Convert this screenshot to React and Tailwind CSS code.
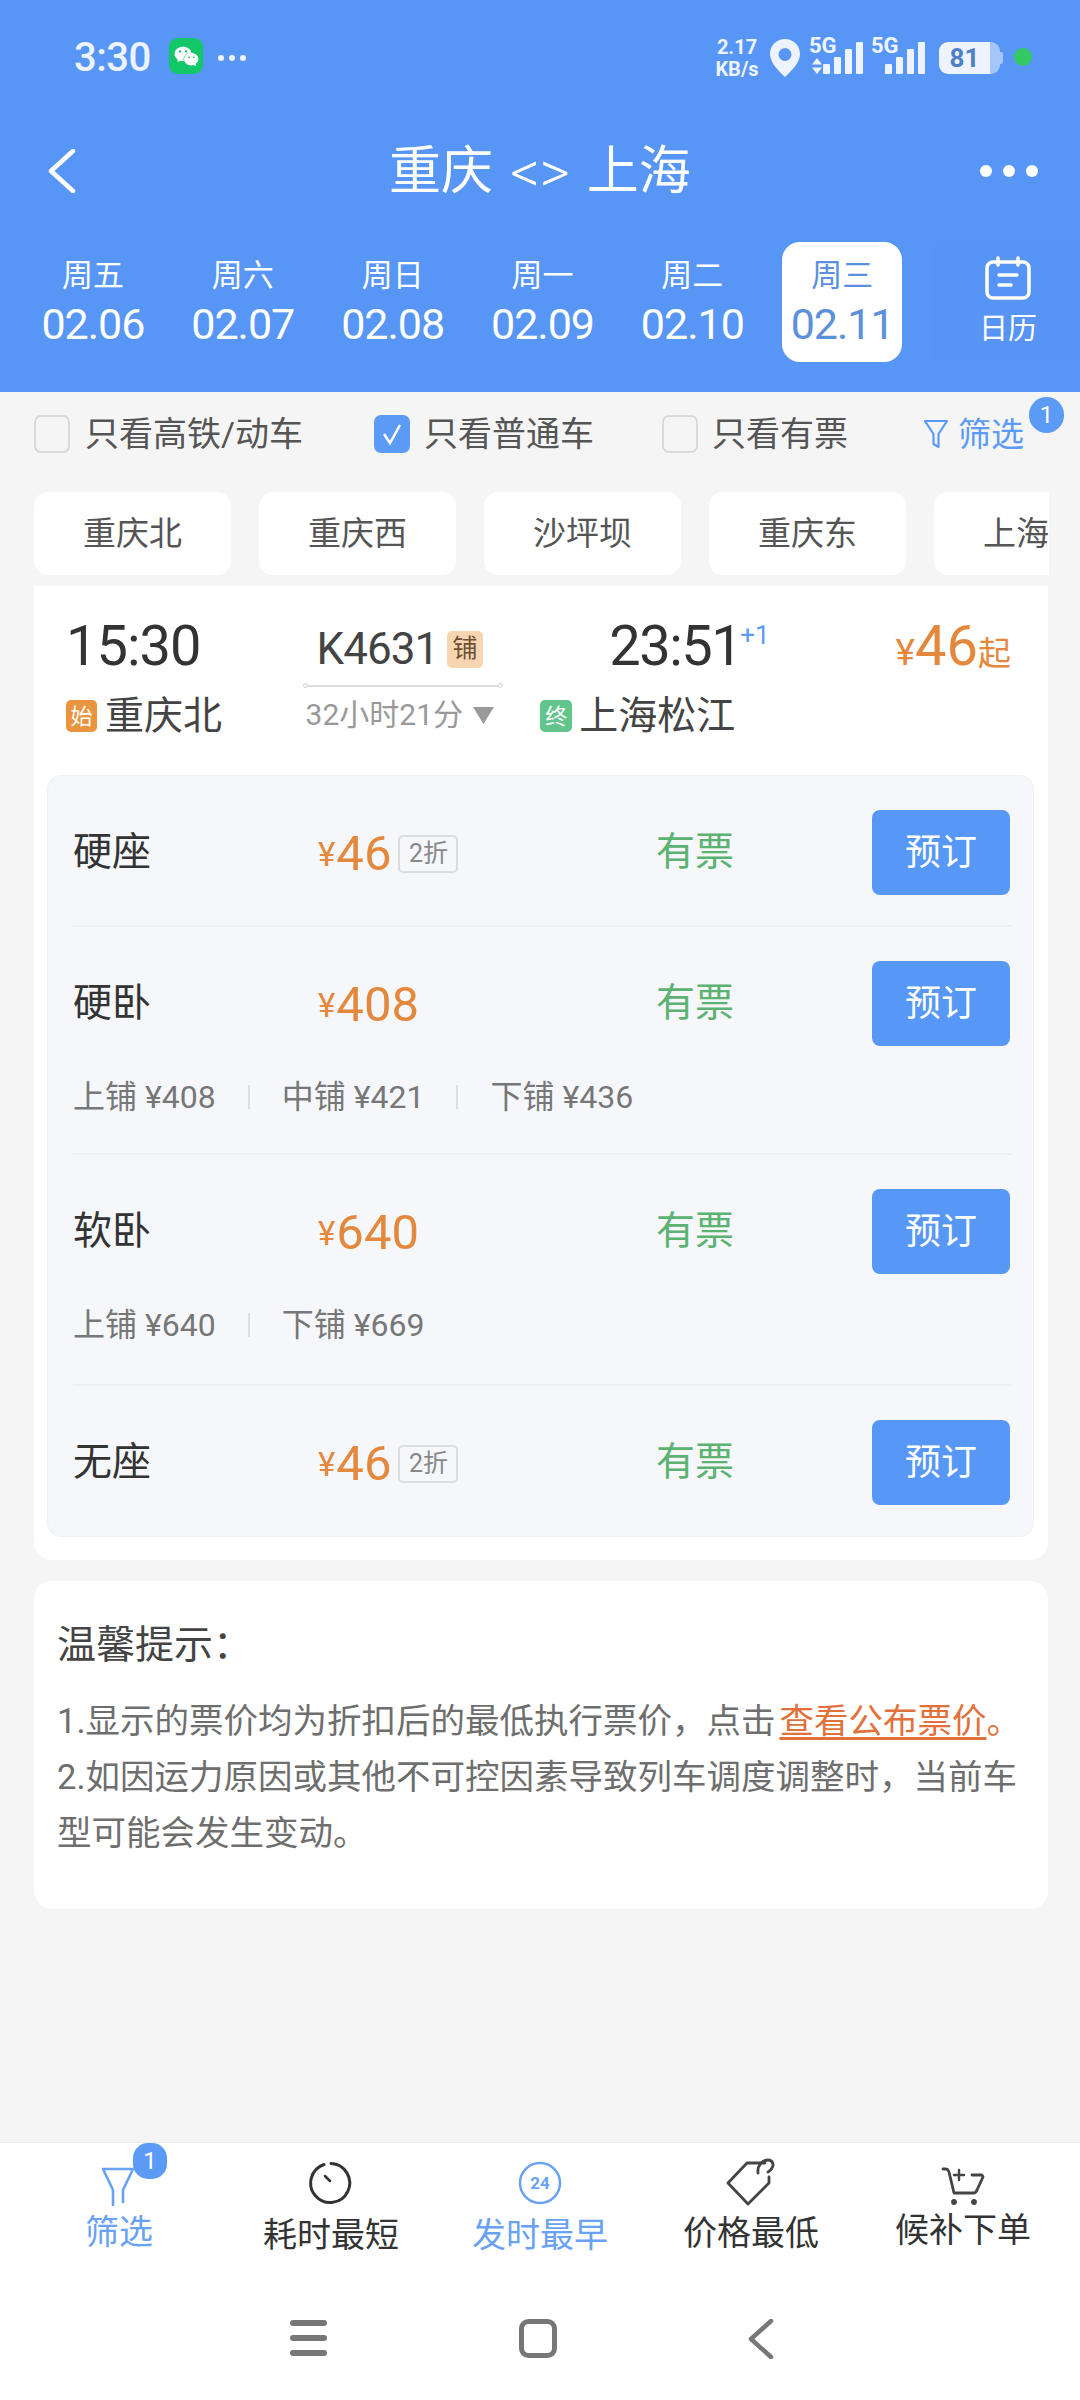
import { FaWeixin } from 'react-icons/fa';

const FONT = 'font-["Roboto","Noto_Sans_CJK_SC",sans-serif]';

const dates = [
  { day: '周五', date: '02.06' },
  { day: '周六', date: '02.07' },
  { day: '周日', date: '02.08' },
  { day: '周一', date: '02.09' },
  { day: '周二', date: '02.10' },
  { day: '周三', date: '02.11', active: true },
];

const stations = ['重庆北', '重庆西', '沙坪坝', '重庆东', '上海'];

const seats = [
  { name: '硬座', price: '46', tag: '2折', h: 'h-[151px]' },
  { name: '硬卧', price: '408', subs: ['上铺 ¥408', '中铺 ¥421', '下铺 ¥436'], h: 'h-[228px]' },
  { name: '软卧', price: '640', subs: ['上铺 ¥640', '下铺 ¥669'], h: 'h-[231px]' },
  { name: '无座', price: '46', tag: '2折', h: 'h-[152px]', last: true },
];

function Bars() {
  return (
    <div className="flex items-end gap-[4px] h-[32px]">
      <div className="w-[7px] h-[10px] rounded-[1px] bg-[#eef4ff]" />
      <div className="w-[7px] h-[17px] rounded-[1px] bg-[#eef4ff]" />
      <div className="w-[7px] h-[25px] rounded-[1px] bg-[#eef4ff]" />
      <div className="w-[7px] h-[32px] rounded-[1px] bg-[#eef4ff]" />
    </div>
  );
}

function StatusBar() {
  return (
    <div className="h-[115px] flex items-start pt-[38px] pl-[74px] text-[#eef4ff]">
      <span className="text-[40px] leading-[40px] font-medium w-[95px] tracking-[-0.5px]">3:30</span>
      <div className="w-[34px] h-[36px] rounded-[9px] bg-[#12c767] flex items-center justify-center text-white">
        <FaWeixin size={25} />
      </div>
      <div className="flex gap-[5px] ml-[15px] mt-[17px]">
        <div className="w-[6px] h-[6px] rounded-full bg-[#eef4ff]" />
        <div className="w-[6px] h-[6px] rounded-full bg-[#eef4ff]" />
        <div className="w-[6px] h-[6px] rounded-full bg-[#eef4ff]" />
      </div>
      <div className="ml-auto flex items-start pr-[48px]">
        <div className="w-[44px] text-center font-bold text-[20px] leading-[19px] mr-[11px]">
          <div>2.17</div>
          <div className="mt-[3px] whitespace-nowrap">KB/s</div>
        </div>
        <svg width="30" height="38" viewBox="0 0 30 38" className="mt-[1px]">
          <path fillRule="evenodd" fill="#eef4ff" d="M15 0C6.7 0 0 6.6 0 15c0 9 9 17 15 23 6-6 15-14 15-23C30 6.6 23.300 0 15 0zm0 9a6.500 6.500 0 1 1 0 13 6.500 6.500 0 0 1 0-13z" />
        </svg>
        <div className="relative w-[54px] ml-[9px] h-[36px]">
          <span className="absolute left-0 top-0 text-[22px] leading-[16px] font-bold">5G</span>
          <div className="absolute right-0 bottom-0"><Bars /></div>
          <svg width="10" height="16" viewBox="0 0 10 16" className="absolute left-[3px] bottom-0">
            <path fill="#eef4ff" d="M5 0l5 6.500H0zM5 16L0 9.500h10z" />
          </svg>
        </div>
        <div className="relative w-[54px] ml-[8px] h-[36px]">
          <span className="absolute left-0 top-0 text-[22px] leading-[16px] font-bold">5G</span>
          <div className="absolute right-0 bottom-0"><Bars /></div>
        </div>
        <div className="flex items-center ml-[14px] mt-[4px]">
          <div className="w-[61px] h-[32px] rounded-[9px] bg-[#a5c6f9] overflow-hidden">
            <div className="w-[51px] h-full rounded-l-[9px] bg-[#eef4ff] flex items-center justify-center text-[#4f7fc9] text-[26px] font-bold leading-none">81</div>
          </div>
          <div className="w-[3px] h-[12px] rounded-r-[2px] bg-[#a5c6f9]" />
        </div>
        <div className="w-[18px] h-[18px] rounded-full bg-[#34c964] ml-[11px] mt-[10px]" />
      </div>
    </div>
  );
}

function NavBar() {
  return (
    <div className="relative h-[112px] flex items-center justify-center text-white">
      <svg width="30" height="44" viewBox="0 0 30 44" fill="none" stroke="white" strokeWidth="4.500" strokeLinecap="round" strokeLinejoin="round" className="absolute left-[47px] top-[34px]">
        <path d="M26 2L4 22l22 20" />
      </svg>
      <div className="flex items-center leading-none pt-[2px]">
        <span className="text-[52px]">重庆</span>
        <span className="text-[58px] font-light mx-[17px]">{'<>'}</span>
        <span className="text-[52px]">上海</span>
      </div>
      <div className="absolute right-[42px] top-[50px] flex gap-[11px]">
        <div className="w-[12px] h-[12px] rounded-full bg-white" />
        <div className="w-[12px] h-[12px] rounded-full bg-white" />
        <div className="w-[12px] h-[12px] rounded-full bg-white" />
      </div>
    </div>
  );
}

function DateTabs() {
  return (
    <div className="flex pl-[18px] pt-[15px]">
      {dates.map((d) => (
        <div key={d.date} className="w-[150px] flex justify-center">
          <div className={`w-[120px] h-[120px] rounded-[18px] flex flex-col items-center pt-[16px] ${d.active ? 'bg-white text-[#5b90dc]' : 'text-white'}`}>
            <span className="text-[31px] leading-[36px]">{d.day}</span>
            <span className="text-[43px] leading-[50px] mt-[5px] tracking-[-1px]">{d.date}</span>
          </div>
        </div>
      ))}
      <div className="w-[149px] h-[120px] ml-[14px] pl-[5px] flex flex-col items-center bg-[#5794f4] pt-[14px] text-white">
        <svg width="46" height="44" viewBox="0 0 46 44" fill="none" stroke="white" strokeWidth="3.500" strokeLinecap="round">
          <rect x="2" y="6" width="42" height="36" rx="6" />
          <path d="M13 2v7M33 2v7M14 19h18M14 29h12" />
        </svg>
        <span className="text-[29px] leading-[34px] mt-[12px]">日历</span>
      </div>
    </div>
  );
}

function Check({ label, on, gap, w }) {
  return (
    <div className={`flex items-center ${w}`}>
      <div className={`w-[36px] h-[38px] rounded-[7px] flex items-center justify-center ${on ? 'bg-[#5b9bf6]' : 'border-[2px] border-[#d9d9d9]'}`}>
        {on && (
          <svg width="24" height="24" viewBox="0 0 24 24" fill="none" stroke="white" strokeWidth="2.500">
            <path d="M4 12l6 9L20 3" />
          </svg>
        )}
      </div>
      <span className={`text-[34px] leading-none text-[#555] ${gap}`}>{label}</span>
    </div>
  );
}

function FilterRow() {
  return (
    <div className="h-[100px] flex items-center pl-[34px] pb-[16px] relative">
      <Check label="只看高铁/动车" w="w-[340px]" gap="ml-[15px]" />
      <Check on label="只看普通车" w="w-[288px]" gap="ml-[14px]" />
      <Check label="只看有票" w="w-[261px]" gap="ml-[14px]" />
      <svg width="26" height="32" viewBox="0 0 26 32" fill="none" stroke="#5b9bf6" strokeWidth="2.200" strokeLinejoin="round">
        <path d="M2 3h22l-8.500 13v13l-5 -3V16z" />
      </svg>
      <span className="text-[33px] leading-none text-[#5b9bf6] ml-[9px]">筛选</span>
      <div className="absolute left-[1029px] top-[5px] w-[35px] h-[36px] rounded-full bg-[#5b9bf6] text-white text-[24px] flex items-center justify-center">1</div>
    </div>
  );
}

function StationChips() {
  return (
    <div className="ml-[34px] w-[1015px] h-[83px] flex gap-[28px] overflow-hidden shrink-0">
      {stations.map((s) => (
        <div key={s} className="flex-none h-full px-[49px] rounded-[14px] bg-white flex items-center text-[33px] text-[#555]">{s}</div>
      ))}
    </div>
  );
}

function TrainHead() {
  return (
    <div className="h-[189px] flex relative pl-[32px] pr-[37px] pt-[32px]">
      <div className="w-[237px]">
        <div className="text-[56px] leading-[56px] text-[#333] tracking-[-1px]">15:30</div>
        <div className="flex items-center mt-[20px]">
          <span className="w-[31px] h-[32px] rounded-[5px] bg-[#ea9440] text-[#fff] text-[22px] flex items-center justify-center">始</span>
          <span className="text-[39px] leading-[44px] text-[#444] ml-[8px]">重庆北</span>
        </div>
      </div>
      <div className="w-[238px] flex flex-col items-center pt-[8px]">
        <div className="flex items-center h-[46px] pl-[14px] self-start">
          <span className="text-[44px] leading-none text-[#444] tracking-[-1px]">K4631</span>
          <span className="w-[36px] h-[37px] rounded-[5px] bg-[#f8d5b0] text-[#6b5137] text-[25px] ml-[9px] flex items-center justify-center">铺</span>
        </div>
        <div className="w-[200px] h-[5px] mt-[11px] self-start flex items-center">
          <div className="w-[5px] h-[5px] rounded-full border border-[#ccc]" />
          <div className="flex-1 h-[2px] bg-[#ddd]" />
          <div className="w-[5px] h-[5px] rounded-full border border-[#ccc]" />
        </div>
        <div className="flex items-center self-start pl-[3px] mt-[9px]">
          <span className="text-[30px] leading-[36px] text-[#999]">32小时21分</span>
          <svg width="21" height="17" viewBox="0 0 21 17" className="ml-[10px]"><path fill="#999" d="M0 0h21L10.500 17z" /></svg>
        </div>
      </div>
      <div className="w-[356px]">
        <div className="flex items-start pl-[69px]">
          <span className="text-[56px] leading-[56px] text-[#333] tracking-[-1.5px]">23:51</span>
          <span className="text-[26px] leading-[26px] text-[#5b9bf6] mt-[-4px] relative top-[8px] -left-[1px]">+1</span>
        </div>
        <div className="flex items-center mt-[20px]">
          <span className="w-[32px] h-[32px] rounded-[5px] bg-[#62c48b] text-white text-[22px] flex items-center justify-center">终</span>
          <span className="text-[39px] leading-[44px] text-[#444] ml-[7px]">上海松江</span>
        </div>
      </div>
      <div className="flex items-baseline h-[56px] text-[#e3883c]">
        <span className="text-[37px] leading-none">¥</span>
        <span className="text-[56px] leading-[56px]">46</span>
        <span className="text-[33px] leading-none">起</span>
      </div>
    </div>
  );
}

function SeatRow({ seat }) {
  return (
    <div className={`${seat.h} pl-[25px] pr-[21px] flex flex-col`}>
      <div className="h-[85px] mt-[34px] flex items-center shrink-0">
        <span className="w-[245px] text-[39px] leading-none text-[#333]">{seat.name}</span>
        <div className="w-[338px] flex items-center text-[#e3883c]">
          <span className="text-[33px] leading-none mt-[4px]">¥</span>
          <span className="text-[49px] leading-none ml-[1px] mt-[2px]">{seat.price}</span>
          {seat.tag && (
            <span className="ml-[7px] mt-[2px] w-[60px] h-[38px] rounded-[5px] border-[2px] border-[#dcdcdc] text-[#888] text-[25px] flex items-center justify-center">{seat.tag}</span>
          )}
        </div>
        <span className="text-[39px] leading-none text-[#5cb270] w-[216px]">有票</span>
        <div className="w-[138px] h-[85px] rounded-[8px] bg-[#5797f5] text-white text-[36px] flex items-center justify-center">预订</div>
      </div>
      {seat.subs && (
        <div className="flex items-center mt-[33px] text-[32px] leading-[36px] text-[#777]">
          {seat.subs.map((s, i) => (
            <div key={s} className="flex items-center">
              {i > 0 && <div className="w-[2px] h-[24px] bg-[#dedede] mx-[32px]" />}
              <span>{s}</span>
            </div>
          ))}
        </div>
      )}
      {!seat.last && <div className="mt-auto h-[2px] bg-[#eef0f3]" />}
    </div>
  );
}

function TrainCard() {
  return (
    <div className="ml-[34px] mt-[11px] w-[1014px] h-[974px] bg-white rounded-b-[18px] shrink-0">
      <TrainHead />
      <div className="ml-[13px] mr-[14px] h-[762px] rounded-[14px] bg-[#f5f7fb] border border-[#eff1f5]">
        {seats.map((s) => <SeatRow key={s.name} seat={s} />)}
      </div>
    </div>
  );
}

function Tips() {
  return (
    <div className="ml-[34px] mt-[21px] w-[1014px] h-[328px] bg-white rounded-[18px] pl-[23px] pr-[20px] pt-[40px] shrink-0">
      <div className="text-[39px] leading-[48px] text-[#444]">温馨提示：</div>
      <div className="text-[34.500px] leading-[56px] text-[#6e6e6e] mt-[24px]">
        1.显示的票价均为折扣后的最低执行票价，点击<span className="ml-[4px] text-[#e2703a] underline underline-offset-4">查看公布票价</span><span className="text-[#e2703a]">。</span>
        <br />
        2.如因运力原因或其他不可控因素导致列车调度调整时，当前车型可能会发生变动。
      </div>
    </div>
  );
}

const tabIcons = {
  filter: (
    <svg width="36" height="40" viewBox="0 0 36 40" fill="none" stroke="#6aa2f3" strokeWidth="2.600" strokeLinecap="round" strokeLinejoin="round">
      <path d="M32 2H2l10 21v15M32 2L22 23v12" />
    </svg>
  ),
  clock: (
    <svg width="44" height="44" viewBox="0 0 44 44" fill="none" stroke="#333" strokeWidth="3" strokeLinecap="round">
      <path d="M15 3.500A19.500 19.500 0 1 0 22 2.500" />
      <path d="M16 15l5 5" strokeWidth="2.500" />
    </svg>
  ),
  early: (
    <svg width="44" height="44" viewBox="0 0 44 44" fill="none">
      <circle cx="22" cy="22" r="20" stroke="#6aa2f3" strokeWidth="2.500" />
      <text x="22" y="28" textAnchor="middle" fontSize="17" fontWeight="700" fill="#6aa2f3" fontFamily="Roboto">24</text>
    </svg>
  ),
  tag: (
    <svg width="50" height="50" viewBox="0 0 50 50" fill="none" stroke="#444" strokeWidth="2.800" strokeLinejoin="round" strokeLinecap="round">
      <path d="M39 7H21L2 27l20 21 21-21v-6" />
      <path d="M32 17c-1-7 4-13 10-13 5 0 6 5 4 8-1 2-2 3-4 4" />
    </svg>
  ),
  cart: (
    <svg width="44" height="40" viewBox="0 0 44 40" fill="none" stroke="#444" strokeWidth="2.800" strokeLinecap="round" strokeLinejoin="round">
      <path d="M2 3h3c2 0 2 1 3 3l5 21h20c1 0 2-1 3-3l6-13c0-1-1-2-2-2H31" />
      <path d="M18 4v10M13 9h10" strokeWidth="2.400" />
      <circle cx="13" cy="36" r="1.500" fill="#444" />
      <circle cx="33" cy="36" r="1.500" fill="#444" />
    </svg>
  ),
};

const tabs = [
  { key: 'filter', label: '筛选', blue: true, cx: 'w-[238px]', pt: 'pt-[24px]', mt: 'mt-[6px]', badge: true },
  { key: 'clock', label: '耗时最短', cx: 'w-[186px]', pt: 'pt-[18px]', mt: 'mt-[11px]' },
  { key: 'early', label: '发时最早', blue: true, cx: 'w-[232px]', pt: 'pt-[18px]', mt: 'mt-[11px]' },
  { key: 'tag', label: '价格最低', cx: 'w-[190px]', pt: 'pt-[13px]', mt: 'mt-[8px]' },
  { key: 'cart', label: '候补下单', cx: 'w-[234px]', pt: 'pt-[23px]', mt: 'mt-[5px]' },
];

function BottomBar() {
  return (
    <div className="mt-auto h-[258px] bg-white border-t border-[#ececec] shrink-0">
      <div className="h-[130px] flex">
        {tabs.map((t) => (
          <div key={t.key} className={`${t.cx} flex flex-col items-center ${t.pt} relative`}>
            <div className="relative flex">
              {tabIcons[t.key]}
              {t.badge && <div className="absolute left-[32px] -top-[24px] w-[34px] h-[36px] rounded-[15px] bg-[#5b9bf6] text-white text-[24px] flex items-center justify-center">1</div>}
            </div>
            <span className={`text-[34px] leading-[38px] whitespace-nowrap ${t.mt} ${t.blue ? 'text-[#6aa2f3]' : 'text-[#333]'}`}>{t.label}</span>
          </div>
        ))}
      </div>
      <div className="h-[127px] flex items-start justify-center pt-[46px] pr-[16px] gap-[191px]">
        <svg width="38" height="38" viewBox="0 0 38 38" fill="#777">
          <rect y="1" width="37" height="6" rx="3" />
          <rect y="16" width="37" height="6" rx="3" />
          <rect y="31" width="37" height="6" rx="3" />
        </svg>
        <svg width="38" height="40" viewBox="0 0 38 40" fill="none" stroke="#777" strokeWidth="5">
          <rect x="2.500" y="2.500" width="33" height="34" rx="7" />
        </svg>
        <svg width="26" height="40" viewBox="0 0 26 40" fill="none" stroke="#777" strokeWidth="4.500" strokeLinecap="round" strokeLinejoin="round">
          <path d="M23 2L3 20l20 18" />
        </svg>
      </div>
    </div>
  );
}

export default function App() {
  return (
    <div className={`w-[1080px] h-[2400px] bg-[#f5f5f5] flex flex-col overflow-hidden ${FONT}`}>
      <div className="h-[392px] bg-[#5896f5] shrink-0">
        <StatusBar />
        <NavBar />
        <DateTabs />
      </div>
      <FilterRow />
      <StationChips />
      <TrainCard />
      <Tips />
      <BottomBar />
    </div>
  );
}
